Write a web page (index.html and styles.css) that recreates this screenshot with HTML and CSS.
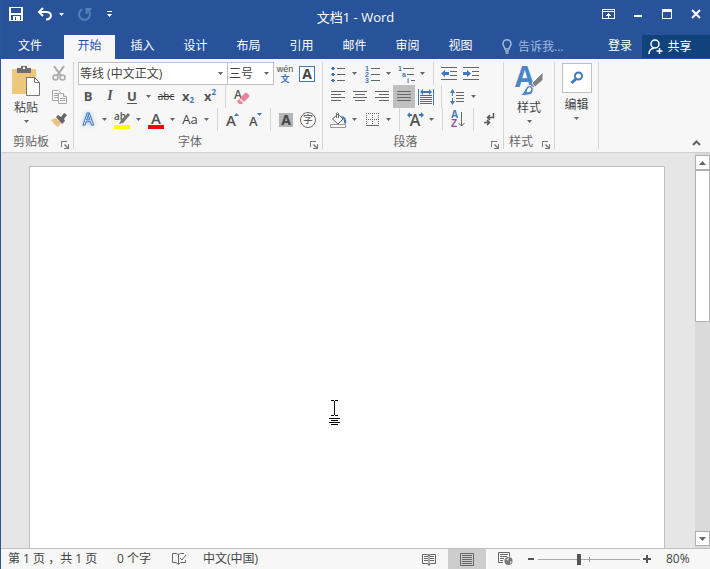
FILE: index.html
```html
<!DOCTYPE html>
<html lang="zh-CN">
<head>
<meta charset="utf-8">
<meta name="viewport" content="width=device-width, initial-scale=1">
<title>文档1 - Word</title>
<link rel="stylesheet" href="styles.css">
</head>
<body>
<div class="window">
  <header class="titlebar">
    <div class="quick">
      <button class="quick-btn" aria-label="保存"><svg width="14" height="14"><path class="crisp" fill="#fff" fill-rule="evenodd" d="M0 0h14v14H0zM2 1v5h10V1zM2 8v5h2v-4h7v4h1V8zM6 10v3h1v-3z"/></svg></button>
      <button class="quick-btn undo" aria-label="撤消"><svg width="16" height="14" fill="none" stroke="#fff" stroke-width="2"><path d="M6 1L2 5l4 4M2 5h7c7 0 6 7 0 7.500"/></svg></button>
      <button class="quick-caret" aria-label="撤消列表"><svg width="5" height="3"><path fill="#fff" d="M0 0h5L2.500 3z"/></svg></button>
      <button class="quick-btn" aria-label="恢复"><svg width="14" height="14" fill="none" stroke="#5580b8" stroke-width="2"><path d="M4 2.500a5.500 5.500 0 1 0 5 0M8.500 7V2h5"/></svg></button>
      <button class="quick-caret last" aria-label="自定义快速访问工具栏"><svg width="5" height="6"><path fill="#fff" d="M0 0h5v1H0zM0 3h5L2.500 6z"/></svg></button>
    </div>
    <h1 class="title">文档1 - Word</h1>
    <div class="controls">
      <button aria-label="功能区显示选项"><svg width="13" height="11" class="crisp"><path fill="#fff" fill-rule="evenodd" d="M0 0h13v10H0zM1 1v1h11V1zM1 3v6h11V3z"/><path fill="#fff" d="M6 4h1v5H6zM5 5h3v1H5zM4 6h5v1H4z"/></svg></button>
      <button aria-label="最小化"><svg width="10" height="10" class="crisp"><path fill="#fff" d="M1 6h8v2H1z"/></svg></button>
      <button aria-label="最大化"><svg width="10" height="10" class="crisp"><path fill="#fff" fill-rule="evenodd" d="M0 0h10v10H0zM1 3v6h8V3z"/></svg></button>
      <button aria-label="关闭"><svg width="10" height="10"><path stroke="#fff" stroke-width="2" d="M1 1l8 8M9 1L1 9"/></svg></button>
    </div>
  </header>

  <nav class="tabs" aria-label="功能区选项卡">
    <button class="tab file">文件</button>
    <button class="tab active">开始</button>
    <button class="tab">插入</button>
    <button class="tab">设计</button>
    <button class="tab">布局</button>
    <button class="tab">引用</button>
    <button class="tab">邮件</button>
    <button class="tab">审阅</button>
    <button class="tab">视图</button>
    <button class="tell"><svg width="10" height="15" fill="none" stroke="#a3b9dc"><path stroke-width="1.500" d="M3 10C3 8 1 7.500 1 4.700a4 4 0 0 1 8 0C9 7.500 7 8 7 10z"/><path stroke-width="1.500" d="M3 12h4M3.500 14h3"/></svg>告诉我...</button>
    <button class="login">登录</button>
    <button class="share"><svg width="15" height="16" fill="none" stroke="#fff" stroke-width="1.500"><circle cx="7" cy="5" r="4"/><path d="M1 15c0-3.500 2-5.500 5-5.800M11.500 9v6M8.500 12h6"/></svg>共享</button>
  </nav>

  <section class="ribbon" aria-label="开始">
    <div class="group clipboard">
      <div class="clip-body">
        <button class="big paste">
          <svg width="28" height="30"><path fill="#edc87a" d="M0 3h24v25H0z"/><path fill="#6f6f6f" d="M5 2h4V0h6v2h4v5H5z"/><path fill="#f7f7f7" d="M11 1h2v2h-2z"/><path fill="#fff" stroke="#777" d="M14.500 11.500h8l5 5v13h-13z"/><path fill="none" stroke="#777" d="M22.500 11.500v5h5"/></svg>
          <span>粘贴</span>
          <svg class="caret" width="5" height="3"><path d="M0 0h5L2.500 3z"/></svg>
        </button>
        <div class="clip-tools">
          <button class="tool" aria-label="剪切"><svg width="14" height="15" fill="none" stroke="#aaa7ad"><path stroke-width="2" d="M2 0l7 10M12 0L5 10"/><circle cx="3.500" cy="11.500" r="2.500" stroke-width="1.500"/><circle cx="10.500" cy="11.500" r="2.500" stroke-width="1.500"/></svg></button>
          <button class="tool" aria-label="复制"><svg width="15" height="14" fill="#f7f7f7" stroke="#aaa7ad"><path d="M.5.5h6l2 2v8h-8z"/><path d="M2 3.500h4M2 5.500h4M2 7.500h4"/><path d="M6.500 3.500h5l3 3v7h-8z"/><path d="M11.500 3.500v3h3M8 8.500h5M8 10.500h5"/></svg></button>
          <button class="tool" aria-label="格式刷"><svg width="16" height="14"><path fill="#edc183" d="M0 7l5-2 5 5-3 4-2-1z"/><path fill="#666" d="M5 4l2-2 3 2 3-4 3 2-3 4 1 2-3 3z"/></svg></button>
        </div>
      </div>
      <div class="foot"><span>剪贴板</span><button class="launch" aria-label="剪贴板设置"><svg width="8" height="8"><path d="M0 0h6v1H1v5H0zM7 3h1v5H3V7h3L3 4l1-1 3 3z"/></svg></button></div>
    </div>

    <div class="group font">
      <div class="row combos">
        <label class="combo family"><select aria-label="字体"><option>等线 (中文正文)</option></select><svg class="caret" width="5" height="3"><path d="M0 0h5L2.500 3z"/></svg></label>
        <label class="combo size"><select aria-label="字号"><option>三号</option></select><svg class="caret" width="5" height="3"><path d="M0 0h5L2.500 3z"/></svg></label>
        <button class="tool" aria-label="拼音指南"><svg width="18" height="18"><text x="9" y="7" class="wen">wén</text><text x="9" y="17" class="wen-cn">文</text></svg></button>
        <button class="tool" aria-label="字符边框"><span class="boxed">A</span></button>
      </div>
      <div class="row">
        <button class="tool letter">B</button>
        <button class="tool letter italic">I</button>
        <button class="tool letter under">U</button>
        <button class="drop" aria-label="下划线样式"><svg class="caret" width="5" height="3"><path d="M0 0h5L2.500 3z"/></svg></button>
        <button class="tool strike">abc</button>
        <button class="tool letter script">x<sub>2</sub></button>
        <button class="tool letter script">x<sup>2</sup></button>
        <i class="sep"></i>
        <button class="tool eraser" aria-label="清除格式"><svg width="16" height="16"><text x="0" y="10" class="t-a" font-size="12">A</text><path fill="#e8849a" d="M6 9l5-5q1-1 2 0l2 2q1 1 0 2l-5 5z"/><path fill="#e8849a" d="M3 12l2-2 4 4-1 1H5z"/></svg></button>
      </div>
      <div class="row">
        <button class="tool" aria-label="文本效果"><svg width="18" height="18"><text x="4" y="14" class="outline" font-size="16">A</text></svg></button>
        <button class="drop" aria-label="文本效果选项"><svg class="caret" width="5" height="3"><path d="M0 0h5L2.500 3z"/></svg></button>
        <button class="tool" aria-label="突出显示"><svg width="16" height="18"><text x="0" y="9" class="t-a" font-size="10">ab</text><path fill="#777" d="M14 2l2 2-7 8-4 1 2-4z"/><path fill="#ff0" d="M0 14h16v4H0z"/></svg></button>
        <button class="drop" aria-label="突出显示颜色"><svg class="caret" width="5" height="3"><path d="M0 0h5L2.500 3z"/></svg></button>
        <button class="tool" aria-label="字体颜色"><svg width="16" height="18"><text x="3" y="13" class="t-a" font-size="15">A</text><path fill="#f00" d="M0 14h16v4H0z"/></svg></button>
        <button class="drop" aria-label="选择字体颜色"><svg class="caret" width="5" height="3"><path d="M0 0h5L2.500 3z"/></svg></button>
        <button class="tool case">Aa</button>
        <button class="drop" aria-label="更改大小写"><svg class="caret" width="5" height="3"><path d="M0 0h5L2.500 3z"/></svg></button>
        <i class="sep"></i>
        <button class="tool" aria-label="增大字号"><svg width="14" height="16"><text x="0" y="14" class="t-a" font-size="15">A</text><path class="blue" d="M8 4l2.500-3L13 4z"/></svg></button>
        <button class="tool" aria-label="减小字号"><svg width="14" height="16"><text x="1" y="14" class="t-a" font-size="13">A</text><path class="blue" d="M9 1l2.500 3L14 1z"/></svg></button>
        <i class="sep"></i>
        <button class="tool" aria-label="字符底纹"><span class="shaded">A</span></button>
        <button class="tool" aria-label="带圈字符"><span class="ringed">字</span></button>
      </div>
      <div class="foot"><span>字体</span><button class="launch" aria-label="字体设置"><svg width="8" height="8"><path d="M0 0h6v1H1v5H0zM7 3h1v5H3V7h3L3 4l1-1 3 3z"/></svg></button></div>
    </div>

    <div class="group para">
      <div class="row">
        <button class="tool" aria-label="项目符号"><svg width="14" height="16"><path class="blue" d="M1 1h2v1h1v1H3v1H1V3H0V2h1zM1 7h2v1h1v1H3v1H1V9H0V8h1zM1 13h2v1h1v1H3v1H1v-1H0v-1h1z"/><path class="line" d="M6 2h8v1H6zM6 8h8v1H6zM6 14h8v1H6z"/></svg></button>
        <button class="drop" aria-label="项目符号库"><svg class="caret" width="5" height="3"><path d="M0 0h5L2.500 3z"/></svg></button>
        <button class="tool" aria-label="编号"><svg width="15" height="16"><text x="0" y="5" class="num">1</text><text x="0" y="11" class="num">2</text><text x="0" y="17" class="num">3</text><path class="line" d="M6 2h9v1H6zM6 8h9v1H6zM6 14h9v1H6z"/></svg></button>
        <button class="drop" aria-label="编号库"><svg class="caret" width="5" height="3"><path d="M0 0h5L2.500 3z"/></svg></button>
        <button class="tool" aria-label="多级列表"><svg width="17" height="16"><text x="0" y="5" class="num">1</text><text x="4" y="11" class="num">a</text><text x="9" y="17" class="num">i</text><path class="line" d="M5 2h11v1H5zM9 8h7v1H9zM13 14h4v1h-4z"/></svg></button>
        <button class="drop" aria-label="列表库"><svg class="caret" width="5" height="3"><path d="M0 0h5L2.500 3z"/></svg></button>
        <i class="sep"></i>
        <button class="tool" aria-label="减少缩进量"><svg width="16" height="14"><path class="line" d="M0 0h16v1H0zM9 4h7v1H9zM9 8h7v1H9zM0 12h16v1H0z"/><path class="blue" d="M0 6.500L4 3v2h4v3H4v2z"/></svg></button>
        <button class="tool" aria-label="增加缩进量"><svg width="16" height="14"><path class="line" d="M0 0h16v1H0zM9 4h7v1H9zM9 8h7v1H9zM0 12h16v1H0z"/><path class="blue" d="M8 6.500L4 3v2H0v3h4v2z"/></svg></button>
      </div>
      <div class="row">
        <button class="tool" aria-label="左对齐"><svg width="14" height="11"><path class="line" d="M0 0h14v1H0zM0 3h10v1H0zM0 6h14v1H0zM0 9h10v1H0z"/></svg></button>
        <button class="tool" aria-label="居中"><svg width="14" height="11"><path class="line" d="M0 0h14v1H0zM2 3h10v1H2zM0 6h14v1H0zM2 9h10v1H2z"/></svg></button>
        <button class="tool" aria-label="右对齐"><svg width="14" height="11"><path class="line" d="M0 0h14v1H0zM4 3h10v1H4zM0 6h14v1H0zM4 9h10v1H4z"/></svg></button>
        <button class="tool selected" aria-pressed="true" aria-label="两端对齐"><svg width="14" height="11"><path class="line" d="M0 0h14v1H0zM0 3h14v1H0zM0 6h14v1H0zM0 9h14v1H0z"/></svg></button>
        <button class="tool" aria-label="分散对齐"><svg width="16" height="16"><path class="blue" d="M0 0h1v16H0zM15 0h1v16h-1zM2 3l3-3v2h6V0l3 3-3 3V4H5v2z"/><path class="line" d="M2 6h12v1H2zM2 8h12v1H2zM2 10h12v1H2zM2 12h12v1H2zM2 14h12v1H2z"/></svg></button>
        <i class="sep"></i>
        <button class="tool" aria-label="行和段落间距"><svg width="14" height="16"><path class="blue" d="M0 4l2.500-4L5 4H3v3H2V4zM0 12l2.500 4L5 12H3V9H2v3z"/><path class="line" d="M6 3h8v1H6zM6 6h8v1H6zM6 9h8v1H6zM6 12h8v1H6z"/></svg></button>
        <button class="drop" aria-label="间距选项"><svg class="caret" width="5" height="3"><path d="M0 0h5L2.500 3z"/></svg></button>
      </div>
      <div class="row">
        <button class="tool" aria-label="底纹"><svg width="17" height="16"><path fill="#fff" stroke="#666" d="M2.500 7L8 2l5 5-5 5zM6.500 6V1.500q1-2 2 0V6"/><path class="blue" d="M11 4q6 0 5 8l-2-1V8z"/><path fill="#fff" stroke="#999" d="M.5 12.500h15v3H.5z"/></svg></button>
        <button class="drop" aria-label="底纹颜色"><svg class="caret" width="5" height="3"><path d="M0 0h5L2.500 3z"/></svg></button>
        <button class="tool" aria-label="边框"><svg width="13" height="14"><path fill="none" stroke="#666" stroke-dasharray="1 1" d="M0 .5h13M0 6.500h13M.5 0v12M6.500 0v12M12.500 0v12"/><path class="line" d="M0 12h13v1H0z"/></svg></button>
        <button class="drop" aria-label="边框选项"><svg class="caret" width="5" height="3"><path d="M0 0h5L2.500 3z"/></svg></button>
        <i class="sep"></i>
        <button class="tool" aria-label="中文版式"><svg width="17" height="15"><text x="8" y="14" text-anchor="middle" class="t-a" font-size="16">A</text><path class="blue" d="M0 3l3-3v2h2v2H3v2zM17 3l-3-3v2h-2v2h2v2z"/></svg></button>
        <button class="drop" aria-label="中文版式选项"><svg class="caret" width="5" height="3"><path d="M0 0h5L2.500 3z"/></svg></button>
        <i class="sep"></i>
        <button class="tool" aria-label="排序"><svg width="14" height="17"><text x="0" y="7" class="sort-a">A</text><text x="0" y="16" class="sort-z">Z</text><path fill="none" stroke="#666" d="M10.500 1v14M7.500 12l3 3 3-3"/></svg></button>
        <i class="sep"></i>
        <button class="tool" aria-label="显示编辑标记"><svg width="11" height="13"><path fill="none" stroke="#555" stroke-width="1.500" d="M9.500 0v4.500H4M6 2L3.500 4.500 6 7M0 9.500h5M3 7l2.500 2.500L3 12"/></svg></button>
      </div>
      <div class="foot"><span>段落</span><button class="launch" aria-label="段落设置"><svg width="8" height="8"><path d="M0 0h6v1H1v5H0zM7 3h1v5H3V7h3L3 4l1-1 3 3z"/></svg></button></div>
    </div>

    <div class="group styles">
      <button class="big">
        <svg width="28" height="30"><text x="0" y="21" class="style-a">A</text><path fill="#808080" stroke="#f7f7f7" d="M28 6v8l-8 7-3-4z"/><path fill="#4a86c5" stroke="#f7f7f7" d="M4 29.500q4-1 6-6 2-5 6-4 4 3 1 8-1 2-13 2z"/><path fill="#fff" d="M12 24q2-4 4-2 1 3-2 4-3 1-2-2z"/></svg>
        <span>样式</span>
        <svg class="caret" width="5" height="3"><path d="M0 0h5L2.500 3z"/></svg>
      </button>
      <div class="foot"><span>样式</span><button class="launch" aria-label="样式窗格"><svg width="8" height="8"><path d="M0 0h6v1H1v5H0zM7 3h1v5H3V7h3L3 4l1-1 3 3z"/></svg></button></div>
    </div>

    <div class="group editing">
      <button class="big">
        <span class="find"><svg width="14" height="14" fill="none" stroke="#4079bd" stroke-width="2"><circle cx="8.500" cy="5" r="3.500"/><path stroke-width="3" d="M6 8l-4.500 4"/></svg></span>
        <span>编辑</span>
        <svg class="caret" width="5" height="3"><path d="M0 0h5L2.500 3z"/></svg>
      </button>
    </div>
    <button class="collapse" aria-label="折叠功能区"><svg width="9" height="6"><path fill="none" stroke="#666" stroke-width="2" d="M1 5l3.500-3.500L8 5"/></svg></button>
  </section>

  <main class="workspace">
    <div class="canvas">
      <div class="page">
        <textarea aria-label="文档正文"></textarea>
        <svg class="pointer crisp" width="11" height="26"><path d="M2 0h3v1H2zM6 0h3v1H6zM5 1h1v14H5zM2 15h3v1H2zM6 15h3v1H6zM0 18h11v1H0zM2 20h7v1H2zM0 22h11v1H0zM2 24h7v1H2z"/></svg>
      </div>
    </div>
    <div class="scroll">
      <button aria-label="向上滚动"><svg width="7" height="4"><path fill="#666" d="M0 4h7L3.500 0z"/></svg></button>
      <div class="track"><div class="thumb"></div></div>
      <button aria-label="向下滚动"><svg width="7" height="4"><path fill="#666" d="M0 0h7L3.500 4z"/></svg></button>
    </div>
  </main>

  <footer class="status">
    <span class="pages">第 1 页 ，共 1 页</span>
    <span class="words">0 个字</span>
    <button class="proof" aria-label="校对"><svg width="15" height="14" fill="none" stroke="#666"><path d="M6.500 2.500L4 1.500H.5v9H4l2.500 2 2-2h5V8M6.500 2v10M6.500 2.500l2-1H12M8 6l2 2 4-5"/></svg></button>
    <span class="lang">中文(中国)</span>
    <button class="view" aria-label="阅读视图"><svg width="14" height="13" fill="none" stroke="#666"><path d="M.5 1.500H5l2 1 2-1h4.500v9H9l-2 1-2-1H.5zM7 1v12"/><path d="M2 3.500h4M2 5.500h4M2 7.500h4M8 3.500h4M8 5.500h4M8 7.500h4"/></svg></button>
    <button class="view on" aria-pressed="true" aria-label="页面视图"><svg width="14" height="13" fill="none" stroke="#666"><path d="M.5.5h13v12H.5zM2 2.500h10M2 4.500h10M2 6.500h10M2 8.500h10M2 10.500h10"/></svg></button>
    <button class="view" aria-label="Web 版式视图"><svg width="15" height="14"><path fill="none" stroke="#666" d="M5 10.500H.5V.5h11v4M2 2.500h8M2 4.500h7M2 6.500h4M2 8.500h3"/><circle cx="10.500" cy="9" r="4" fill="#777"/><path fill="#ddd" d="M8 7l3-1-1 3zM12 9l2 1-2 2z"/></svg></button>
    <button class="step" aria-label="缩小"><svg width="8" height="8" class="crisp"><path fill="#555" d="M1 3h6v2H1z"/></svg></button>
    <label class="zoom"><input type="range" min="0" max="100" value="40" aria-label="显示比例"></label>
    <button class="step" aria-label="放大"><svg width="8" height="8" class="crisp"><path fill="#555" d="M0 3h8v2H0zM3 0h2v8H3z"/></svg></button>
    <output class="percent">80%</output>
  </footer>
</div>
</body>
</html>
```
FILE: styles.css
```css
* { box-sizing: border-box; }
html, body { height: 100%; margin: 0; }
body, button, select, textarea {
  font-family: "Open Sans", "Noto Sans CJK SC", sans-serif;
  font-size: 12px;
  color: #444;
}
button {
  display: flex;
  align-items: center;
  justify-content: center;
  padding: 0;
  border: 0;
  background: none;
  line-height: 16px;
  white-space: nowrap;
}
svg { display: block; flex: none; overflow: visible; }
.crisp, .line { shape-rendering: crispEdges; }
.line { fill: #666; }
.blue { fill: #3f78bc; }
.caret { fill: #666; }

.window {
  display: flex;
  flex-direction: column;
  height: 100vh;
  border-left: 1px solid #2a579a;
  background: #f7f7f7;
}

/* Title bar */
.titlebar {
  display: grid;
  grid-template-columns: 1fr auto 1fr;
  align-items: center;
  height: 35px;
  background: #28539b;
}
.quick { display: flex; align-items: center; height: 28px; align-self: start; padding-left: 4px; }
.quick-btn { width: 22px; height: 28px; }
.quick-btn.undo { margin-left: 7px; }
.quick-caret { width: 10px; height: 28px; margin-right: 8px; }
.quick-caret.last { margin-left: 8px; }
.title { margin: 0; padding-bottom: 2px; font-size: 13px; font-weight: 400; line-height: 18px; color: #fff; }
.controls { display: flex; justify-content: flex-end; align-self: start; }
.controls button { width: 29px; height: 28px; }

/* Tabs */
.tabs { display: flex; height: 24px; background: #28539b; }
.tab { width: 51px; height: 22px; margin: 0 1px; color: #fff; }
.tab.file { width: 58px; margin: 0 4px 0 0; }
.tab.active { height: 24px; padding-bottom: 2px; background: #f7f7f7; color: #28539b; }
.tell { gap: 6px; height: 23px; margin-left: 15px; color: #a3b9dc; }
.login { height: 22px; margin-left: auto; padding: 0 10px; color: #fff; }
.share { gap: 4px; width: 68px; height: 23px; padding-right: 12px; background: #10427c; color: #fff; }

/* Ribbon */
.ribbon { display: flex; padding: 3px 0; border-bottom: 1px solid #d0d0d0; }
.group {
  display: flex;
  flex-direction: column;
  height: 87px;
  padding: 0 3px;
  border-right: 1px solid #d5d5d5;
}
.group.para { padding-left: 4px; }
.row { display: flex; flex: none; height: 23px; }
.tool { width: 22px; height: 23px; }
.tool.selected { background: #c0c0c0; }
.drop { width: 10px; height: 23px; margin-right: 2px; }
.sep { width: 1px; height: 23px; margin: 0 4px; background: #d5d5d5; }
.foot { display: flex; flex: none; align-items: flex-end; margin-top: auto; height: 14px; color: #666; }
.foot span { flex: 1; padding-right: 6px; text-align: center; line-height: 14px; }
.launch { width: 10px; height: 12px; padding-top: 4px; fill: #777; }

.clip-body { display: flex; flex: none; height: 69px; }
.clip-tools { width: 22px; }
.big { flex: none; flex-direction: column; gap: 4px; width: 44px; height: 69px; padding-top: 4px; justify-content: flex-start; }
.clipboard { width: 73px; }
.clipboard .foot span { padding-right: 2px; }
.styles { width: 51px; }
.editing { width: 44px; padding: 0; }
.editing .big { width: 43px; padding-top: 1px; }
.find { display: flex; align-items: center; justify-content: center; width: 30px; height: 30px; border: 1px solid #c0c0c0; background: #fff; }

.combos { padding-left: 1px; }
.combo { position: relative; height: 23px; }
.combo select {
  width: 100%;
  height: 23px;
  padding: 0 1px;
  border: 1px solid #c0c0c0;
  border-radius: 0;
  background: #fff;
  appearance: none;
}
.combo .caret { position: absolute; right: 5px; top: 10px; pointer-events: none; }
.family { width: 150px; }
.size { width: 47px; margin-left: -1px; }
.boxed, .shaded { width: 16px; height: 16px; font: 700 14px/14px "Open Sans", sans-serif; }
.boxed { border: 1px solid #3f78bc; background: #fff; }
.shaded { width: 14px; height: 14px; background: #b5b5b5; }
.ringed { width: 16px; height: 16px; border: 1px solid #666; border-radius: 50%; background: #fff; font-size: 10px; line-height: 13px; }
.letter { padding-bottom: 2px; font-size: 13px; font-weight: 700; color: #555; }
.italic { font-family: "Liberation Serif", serif; font-size: 14px; font-style: italic; }
.under { text-decoration: underline; text-underline-offset: 2px; }
.strike { padding-bottom: 2px; font-size: 10px; text-decoration: line-through; color: #333; }
.script sub, .script sup { font-size: 8px; line-height: 8px; color: #3f78bc; }
.script sub { padding-top: 8px; }
.script sup { padding-bottom: 8px; }
.eraser { width: 24px; }
.case { padding-bottom: 2px; font-size: 13px; }
text { font-family: "Open Sans", "Noto Sans CJK SC", sans-serif; }
.t-a { font-weight: 600; fill: #555; }
.wen { font-family: "Liberation Sans", sans-serif; font-size: 9px; text-anchor: middle; fill: #444; }
.wen-cn { font-size: 9px; font-weight: 700; text-anchor: middle; fill: #3f78bc; }
.outline { font-weight: 600; fill: #fff; stroke: #3f78bc; stroke-width: 1px; filter: drop-shadow(0 0 2px #9cc3ea); }
.num { font-family: "Liberation Sans", sans-serif; font-size: 7px; font-weight: 700; fill: #3f78bc; }
.sort-a, .sort-z { font-family: "Liberation Sans", sans-serif; font-size: 10px; font-weight: 700; fill: #3f78bc; }
.sort-z { fill: #8a52a8; }
.style-a { font-size: 28px; font-weight: 700; fill: #4a86c5; }
.collapse { align-self: flex-end; width: 27px; height: 12px; margin-left: auto; }

/* Document */
.workspace { display: flex; flex: 1; min-height: 0; background: #e6e6e6; }
.canvas { display: flex; flex: 1; padding: 13px 30px 0 28px; }
.page { position: relative; flex: 1; border: 1px solid #c0c0c0; border-bottom: 0; background: #fff; }
.page textarea { display: block; width: 100%; height: 100%; border: 0; padding: 48px; resize: none; background: none; outline: 0; }
.pointer { position: absolute; left: 299px; top: 233px; }
.scroll { display: flex; flex-direction: column; width: 15px; padding: 2px 0; background: #dadada; }
.scroll button { height: 15px; border: 1px solid #b0b0b0; background: #fff; }
.track { flex: 1; }
.thumb { height: 42%; border: 1px solid #b0b0b0; background: #fff; }

/* Status bar */
.status { display: flex; align-items: center; height: 21px; border-top: 1px solid #c0c0c0; line-height: 20px; white-space: nowrap; }
.pages { width: 116px; padding-left: 7px; }
.words { width: 54px; }
.proof { width: 16px; height: 20px; }
.lang { margin-left: 16px; margin-right: auto; }
.view { width: 38px; height: 20px; }
.view.on { background: #cdcdcd; }
.step { width: 14px; height: 20px; }
.zoom { position: relative; display: flex; align-items: center; width: 102px; height: 20px; }
.zoom::after { content: ""; position: absolute; left: 50%; top: 8px; width: 1px; height: 5px; background: #999; }
.zoom input {
  width: 100%;
  height: 11px;
  margin: 0;
  appearance: none;
  background: linear-gradient(#aaa, #aaa) center / 100% 1px no-repeat;
}
.zoom input::-webkit-slider-thumb { appearance: none; width: 4px; height: 11px; background: #555; }
.percent { width: 56px; padding-left: 12px; }
```
